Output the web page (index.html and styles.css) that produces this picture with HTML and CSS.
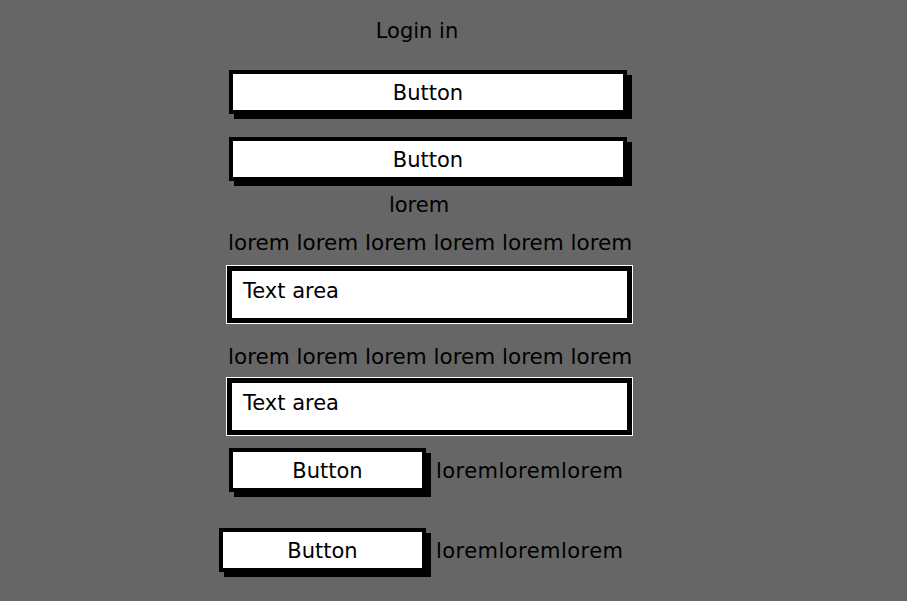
FILE: index.html
```html
<!DOCTYPE html>
<html lang="en">
<head>
<meta charset="utf-8">
<title>Login in</title>
<link rel="stylesheet" href="styles.css">
</head>
<body>
<main class="panel">
  <h1 class="title">Login in</h1>
  <button class="btn btn-wide">Button</button>
  <button class="btn btn-wide btn-second">Button</button>
  <p class="caption">lorem</p>
  <p class="label">lorem lorem lorem lorem lorem lorem</p>
  <div class="textarea">Text area</div>
  <p class="label label-second">lorem lorem lorem lorem lorem lorem</p>
  <div class="textarea textarea-second">Text area</div>
  <div class="row">
    <button class="btn btn-small">Button</button>
    <span class="row-text">loremloremlorem</span>
  </div>
  <div class="row row-last">
    <button class="btn btn-small btn-shifted">Button</button>
    <span class="row-text">loremloremlorem</span>
  </div>
</main>
</body>
</html>
```

FILE: styles.css
```css
html, body {
  margin: 0;
  padding: 0;
  background: #666666;
  height: 100%;
}

body {
  font-family: "DejaVu Sans", "Open Sans", sans-serif;
  color: #000;
}

.panel {
  width: 404px;
  margin-left: 228px;
  padding-top: 18px;
  display: flex;
  flex-direction: column;
  align-items: flex-start;
}

.title {
  margin: 0;
  align-self: stretch;
  text-align: center;
  padding-right: 26px;
  font-size: 21px;
  font-weight: 400;
  line-height: 26px;
}

.btn {
  font-family: "DejaVu Sans", "Open Sans", sans-serif;
  font-size: 21px;
  color: #000;
  background: #fff;
  border: 4px solid #000;
  box-shadow: 5px 5px 0 #000;
  padding: 2px 0 0;
  height: 44px;
  cursor: pointer;
}

.btn-wide {
  width: 398px;
  margin-left: 1px;
  margin-top: 26px;
}

.btn-second {
  margin-top: 23px;
}

.caption {
  margin: 12px 0 0;
  align-self: stretch;
  text-align: center;
  padding-right: 22px;
  font-size: 21px;
  line-height: 24px;
}

.label {
  margin: 14px 0 0;
  font-size: 21.5px;
  line-height: 24px;
  white-space: nowrap;
}

.label-second {
  margin-top: 22px;
}

.textarea {
  box-sizing: border-box;
  margin-top: 11px;
  width: 405px;
  height: 57px;
  margin-left: -1px;
  background: #fff;
  border: 5px solid #000;
  outline: 1px solid #fff;
  outline-offset: 0;
  padding: 8px 11px;
  font-size: 21px;
  line-height: 24px;
}

.textarea-second {
  margin-top: 9px;
}

.row {
  display: flex;
  align-items: center;
  gap: 10px;
  margin-top: 13px;
}

.row-last {
  margin-top: 36px;
}

.btn-small {
  width: 197px;
  margin-left: 1px;
  height: 44px;
}

.btn-shifted {
  width: 207px;
  margin-left: -9px;
}

.row-text {
  font-size: 21px;
  letter-spacing: 0.45px;
  line-height: 24px;
  margin-top: 2px;
}
```
